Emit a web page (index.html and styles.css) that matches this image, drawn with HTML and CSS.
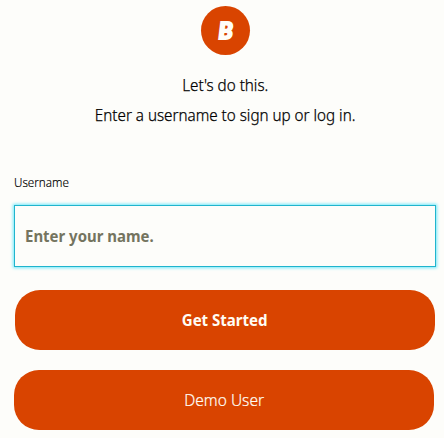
FILE: index.html
```html
<!DOCTYPE html>
<html lang="en">
<head>
<meta charset="utf-8">
<title>Log in</title>
<link rel="stylesheet" href="styles.css">
</head>
<body>
<main class="login">
  <div class="logo"><span class="logo-letter">B</span></div>
  <p class="intro"><span class="text text-first">Let's do this.</span></p>
  <p class="intro"><span class="text text-second">Enter a username to sign up or log in.</span></p>
  <form class="form">
    <label class="label" for="username"><span class="text text-label">Username</span></label>
    <div class="field"><label class="text placeholder" for="username">Enter your name.</label><input class="input" id="username" type="text"></div>
    <button class="button primary" type="button"><span class="text text-start">Get Started</span></button>
    <button class="button demo" type="button"><span class="text text-demo">Demo User</span></button>
  </form>
</main>
</body>
</html>
```
FILE: styles.css
```css
* { box-sizing: border-box; }
body {
  margin: 0;
  background: #fdfdfa;
  color: #000;
  font-family: "Noto Sans", "Open Sans", sans-serif;
  font-size: 16px;
  overflow: hidden;
}
.login { height: 438px; padding: 6px 8px 0 14px; }
.logo {
  display: flex;
  align-items: center;
  justify-content: center;
  width: 49px;
  height: 49px;
  margin: 0 0 15px 187px;
  border-radius: 50%;
  background: #d94400;
}
.logo-letter {
  color: #fffdf8;
  font: italic 900 23px/46px Lato, sans-serif;
  -webkit-text-stroke: 2px #fffdf8;
  transform: translateY(-1px);
}
.text { display: inline-block; white-space: nowrap; }
.intro { margin: 0; height: 30px; line-height: 30px; text-align: center; font-weight: 300; -webkit-text-stroke: .25px #000; }
.text-first { transform: scaleX(.95); }
.text-second { transform: scaleX(.95); }
.form { display: flex; flex-direction: column; padding-top: 38px; }
.label { height: 37px; font-size: 12px; line-height: 30px; font-weight: 300; -webkit-text-stroke: .15px #000; }
.text-label { transform: scaleX(.97); transform-origin: left; }
.field {
  display: flex;
  align-items: center;
  height: 62px;
  padding-left: 10px;
  border: 1px solid #20b4cd;
  box-shadow: 0 0 3px 1px #70e8fa;
}
.placeholder { color: #74745f; font-weight: 700; transform: scaleX(.935); transform-origin: left; }
.input { flex: 1; min-width: 0; height: 58px; border: 0; outline: 0; background: transparent; }
.button {
  width: 420px;
  height: 60px;
  padding: 0;
  border: 0;
  border-radius: 25px;
  background: #d94400;
  color: #fffdf5;
  font: 300 16px/60px "Noto Sans", "Open Sans", sans-serif;
}
.primary { margin: 23px 0 0 1px; font-weight: 700; }
.demo { margin-top: 20px; -webkit-text-stroke: .2px #fffdf5; }
.text-start { transform: scaleX(.94); }
.text-demo { transform: scaleX(.97); }
```
